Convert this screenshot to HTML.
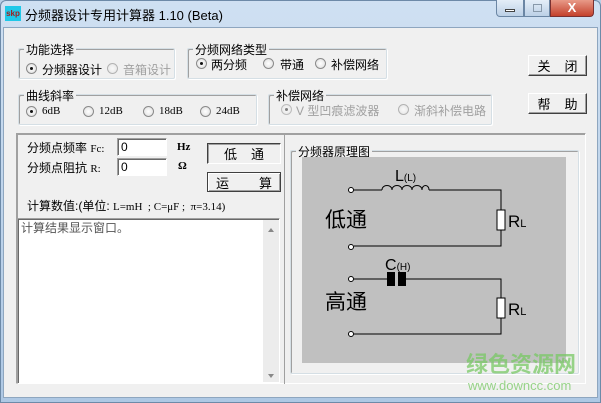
<!DOCTYPE html>
<html><head><meta charset="utf-8"><style>
*{margin:0;padding:0;box-sizing:border-box}
body{width:601px;height:403px;overflow:hidden;background:#b9cfe6;font-family:"Liberation Sans","Noto Sans CJK SC",sans-serif;font-size:12px;color:#000;position:relative}
.a{position:absolute}
.win{left:0;top:0;width:601px;height:403px;background:linear-gradient(#cfe0f2,#aec8e4);border:1px solid #6d8aa8;border-radius:6px 6px 0 0}
.client{left:3px;top:27px;width:595px;height:371px;background:#f0f0f0;border:1px solid #8ea6bf}
.grp{border:1px solid #d5dfe5;box-shadow:inset 1px 1px 0 #a0a0a0, 1px 1px 0 #fff;border-radius:2px}
.lbl{background:#f0f0f0;padding:0 2px;white-space:nowrap;font-size:12px}
.t{white-space:nowrap;font-size:12px}
.rad{width:11px;height:11px;border-radius:50%;border:1px solid #8a8a8a;background:radial-gradient(#fff,#dcdcdc)}
.rad.on::after{content:"";position:absolute;left:3px;top:3px;width:3px;height:3px;border-radius:50%;background:#111}
.dis{color:#a0a0a0}
.btn{background:#f0f0f0;border:1px solid;border-color:#fff #404040 #404040 #fff;box-shadow:inset -1px -1px 0 #a0a0a0;text-align:center;font-size:13px;white-space:nowrap;display:flex;justify-content:center;gap:14px;align-items:center}
.inp{background:#fff;border:1px solid;border-color:#a0a0a0 #fff #fff #a0a0a0;box-shadow:inset 1px 1px 0 #696969;font-size:12px;padding:1px 3px;font-family:"Liberation Sans",sans-serif}
.mono{font-family:"Liberation Serif","Noto Serif CJK SC",serif;font-size:11px}
</style></head><body>
<div class="a win"></div>
<div class="a" style="left:5px;top:6px;width:16px;height:15px;background:#1fc8e8;font-size:8px;color:#a02020;line-height:15px;text-align:center;font-weight:bold">skp</div>
<div class="a t" style="left:25px;top:5px;font-size:13px">分频器设计专用计算器 1.10 (Beta)</div>
<div class="a" style="left:496px;top:0;width:28px;height:17px;border:1px solid #6b86a4;border-top:none;border-radius:0 0 0 4px;background:linear-gradient(#e4eef8,#bcd0e6)"><div class="a" style="left:8px;top:9px;width:10px;height:3px;background:#fff;border:1px solid #444"></div></div>
<div class="a" style="left:524px;top:0;width:26px;height:17px;border:1px solid #6b86a4;border-top:none;background:linear-gradient(#e4eef8,#bcd0e6)"><div class="a" style="left:8px;top:4px;width:9px;height:8px;border:1px solid #8899aa"></div></div>
<div class="a" style="left:550px;top:0;width:44px;height:17px;border:1px solid #7a3030;border-top:none;border-radius:0 0 4px 0;background:linear-gradient(#e89a88,#c4412c);color:#fff;font-weight:bold;text-align:center;font-size:13px;line-height:15px">X</div>
<div class="a client"></div>

<div class="a grp" style="left:18px;top:48px;width:157px;height:31px"></div>
<div class="a lbl" style="left:24px;top:41px">功能选择</div>
<div class="a rad on" style="left:26px;top:63px"></div><div class="a t" style="left:42px;top:61px">分频器设计</div>
<div class="a rad" style="left:107px;top:63px;opacity:.6"></div><div class="a t dis" style="left:123px;top:61px">音箱设计</div>

<div class="a grp" style="left:187px;top:48px;width:200px;height:31px"></div>
<div class="a lbl" style="left:193px;top:41px">分频网络类型</div>
<div class="a rad on" style="left:196px;top:58px"></div><div class="a t" style="left:211px;top:56px">两分频</div>
<div class="a rad" style="left:263px;top:58px"></div><div class="a t" style="left:280px;top:56px">带通</div>
<div class="a rad" style="left:315px;top:58px"></div><div class="a t" style="left:331px;top:56px">补偿网络</div>

<div class="a grp" style="left:18px;top:94px;width:239px;height:31px"></div>
<div class="a lbl" style="left:24px;top:87px">曲线斜率</div>
<div class="a rad on" style="left:26px;top:106px"></div><div class="a mono" style="left:42px;top:105px">6dB</div>
<div class="a rad" style="left:83px;top:106px"></div><div class="a mono" style="left:99px;top:105px">12dB</div>
<div class="a rad" style="left:143px;top:106px"></div><div class="a mono" style="left:159px;top:105px">18dB</div>
<div class="a rad" style="left:200px;top:106px"></div><div class="a mono" style="left:216px;top:105px">24dB</div>

<div class="a grp" style="left:268px;top:94px;width:224px;height:31px"></div>
<div class="a lbl" style="left:274px;top:87px">补偿网络</div>
<div class="a rad on" style="left:281px;top:104px;opacity:.5"></div><div class="a t dis" style="left:296px;top:102px">V 型凹痕滤波器</div>
<div class="a rad" style="left:398px;top:104px;opacity:.6"></div><div class="a t dis" style="left:414px;top:102px">渐斜补偿电路</div>

<div class="a btn" style="left:528px;top:55px;width:59px;height:21px"><span>关</span><span>闭</span></div>
<div class="a btn" style="left:528px;top:93px;width:59px;height:21px"><span>帮</span><span>助</span></div>

<div class="a" style="left:16px;top:133px;width:570px;height:251px;border:1px solid;border-color:#a0a0a0 #fff #fff #a0a0a0;box-shadow:1px 1px 0 #a0a0a0 inset"></div>
<div class="a t" style="left:27px;top:139px">分频点频率 <span class="mono">Fc:</span></div>
<div class="a t" style="left:27px;top:159px">分频点阻抗 <span class="mono">R:</span></div>
<div class="a inp" style="left:117px;top:138px;width:50px;height:18px">0</div>
<div class="a inp" style="left:117px;top:158px;width:50px;height:18px">0</div>
<div class="a mono" style="left:177px;top:141px;font-weight:bold">Hz</div>
<div class="a mono" style="left:178px;top:160px;font-weight:bold">Ω</div>
<div class="a btn" style="left:207px;top:143px;width:74px;height:21px;border-color:#404040 #fff #fff #404040;box-shadow:inset 1px 1px 0 #a0a0a0"><span>低</span><span>通</span></div>
<div class="a btn" style="left:207px;top:172px;width:74px;height:20px;gap:30px;border:1px solid #404040;box-shadow:inset 1px 1px 0 #fff,inset -1px -1px 0 #a0a0a0"><span>运</span><span>算</span></div>
<div class="a t" style="left:27px;top:197px">计算数值:(单位: <span class="mono">L=mH &nbsp;; C=μF ; &nbsp;π=3.14)</span></div>
<div class="a" style="left:17px;top:218px;width:263px;height:166px;background:#fff;border:1px solid;border-color:#a0a0a0 #fff #fff #a0a0a0;box-shadow:inset 1px 1px 0 #696969"></div>
<div class="a t" style="left:21px;top:219px;color:#555">计算结果显示窗口。</div>
<div class="a" style="left:263px;top:220px;width:16px;height:162px;background:#ececec"></div>
<div class="a" style="left:268px;top:228px;border:3px solid transparent;border-bottom:4px solid #888;border-top:0"></div>
<div class="a" style="left:268px;top:374px;border:3px solid transparent;border-top:4px solid #888;border-bottom:0"></div>

<div class="a" style="left:284px;top:133px;width:302px;height:251px;border-left:1px solid #a0a0a0"></div>
<div class="a grp" style="left:290px;top:150px;width:289px;height:224px"></div>
<div class="a lbl" style="left:296px;top:143px">分频器原理图</div>
<svg class="a" style="left:302px;top:157px" width="264" height="206" viewBox="0 0 264 206">
<rect width="264" height="206" fill="#c0c0c0"/>
<g stroke="#000" stroke-width="1" fill="none">
<circle cx="49" cy="33" r="2.5" fill="#fff"/>
<path d="M52 33H80 M127 33H199V53 M199 73V89H52"/>
<path d="M80 33c0-6 10-6 10 0c0-6 10-6 10 0c0-6 10-6 10 0c0-6 10-6 10 0c0-6 7-6 7 0"/>
<rect x="195" y="53" width="8" height="20" fill="#fff"/>
<circle cx="49" cy="90" r="2.5" fill="#fff"/>
<circle cx="49" cy="122" r="2.5" fill="#fff"/>
<path d="M52 122H85 M104 122H199V141 M199 161V177H52"/>
<rect x="195" y="141" width="8" height="20" fill="#fff"/>
<circle cx="49" cy="177" r="2.5" fill="#fff"/>
</g>
<rect x="85" y="115" width="8" height="14" fill="#000"/><rect x="96" y="115" width="8" height="14" fill="#000"/>
<g font-family="Liberation Sans,sans-serif" fill="#000">
<text x="93" y="24" font-size="16">L<tspan font-size="10">(L)</tspan></text>
<text x="83" y="113" font-size="16">C<tspan font-size="10">(H)</tspan></text>
<text x="206" y="70" font-size="17">R<tspan font-size="11">L</tspan></text>
<text x="206" y="158" font-size="17">R<tspan font-size="11">L</tspan></text>
<text x="23" y="70" font-size="21" font-family="Noto Sans CJK SC,sans-serif">低通</text>
<text x="23" y="152" font-size="21" font-family="Noto Sans CJK SC,sans-serif">高通</text>
</g>
</svg>
<div class="a" style="left:466px;top:350px;font-size:22px;font-weight:bold;color:rgba(120,200,100,.75);font-family:'Noto Sans CJK SC',sans-serif;white-space:nowrap;line-height:26px">绿色资源网</div>
<div class="a" style="left:468px;top:378px;font-size:13px;color:rgba(120,200,100,.75);white-space:nowrap">www.downcc.com</div>
</body></html>
